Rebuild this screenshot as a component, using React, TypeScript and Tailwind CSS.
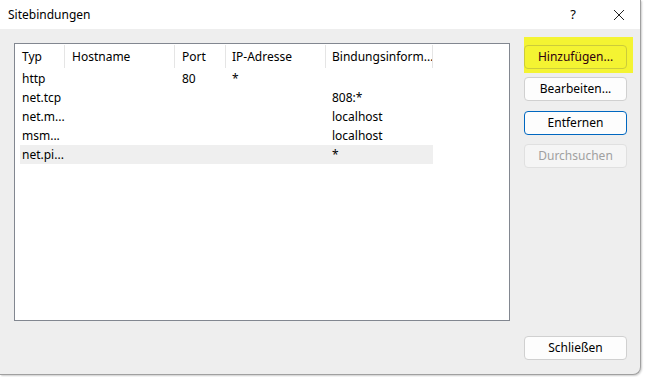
import React from "react";

const font = { fontFamily: '"Noto Sans", "Segoe UI", sans-serif' };

const cols = [
  { w: "w-[45px]", pl: "pl-[2px]" },
  { w: "w-[110px]", pl: "pl-[7px]" },
  { w: "w-[51px]", pl: "pl-[7px]" },
  { w: "w-[100px]", pl: "pl-[6px]" },
  { w: "w-[107px]", pl: "pl-[6px]" },
];

const headers = ["Typ", "Hostname", "Port", "IP-Adresse", "Bindungsinform..."];
const rows = [
  ["http", "", "80", "*", ""],
  ["net.tcp", "", "", "", "808:*"],
  ["net.m...", "", "", "", "localhost"],
  ["msm...", "", "", "", "localhost"],
  ["net.pi...", "", "", "", "*"],
];

function Btn({ children, variant }: { children: React.ReactNode; variant?: "focus" | "disabled" | "hl" }) {
  const base = "h-[24px] w-[103px] rounded-[4px] flex items-center justify-center text-[12px] border";
  const v =
    variant === "focus"
      ? "bg-[#fdfdfd] border-[#0067c0] text-black"
      : variant === "disabled"
      ? "bg-[#f5f5f5] border-[#e0e0e0] text-[#a0a0a0]"
      : variant === "hl"
      ? "bg-[#f4f432] border-[#cccc3a] text-[#300010]"
      : "bg-[#fdfdfd] border-[#d0d0d0] text-black";
  return <div className={`${base} ${v}`}>{children}</div>;
}

export default function App() {
  return (
    <div className="w-[646px] h-[377px] bg-white overflow-hidden" style={font}>
      <div className="w-[641px] h-[375px] bg-[#eeeeee] rounded-br-[8px] border-r border-b border-[#a0a0a0] flex flex-col overflow-hidden shadow-[1px_1px_2px_rgba(0,0,0,0.2)]">
        {/* Title bar */}
        <div className="h-[29px] bg-white flex items-center shrink-0">
          <span className="pl-[8px] text-[12px] text-black">Sitebindungen</span>
          <div className="flex-1" />
          <span className="text-[13px] text-black w-[12px] text-center mr-[34px]">?</span>
          <svg width="12" height="12" viewBox="0 0 12 12" className="mr-[15px]">
            <path d="M1 1 L11 11 M11 1 L1 11" stroke="#222" strokeWidth="1" fill="none" />
          </svg>
        </div>
        {/* Body */}
        <div className="flex-1 flex flex-col pl-[14px] pt-[14px]">
          <div className="flex">
            {/* List */}
            <div className="w-[496px] h-[278px] bg-white border border-[#828790] text-[12px] text-black">
              <div className="flex h-[25px] items-center ml-[5px]">
                {headers.map((h, i) => (
                  <div key={i} className={`${cols[i].w} ${cols[i].pl} h-[23px] flex items-center border-r border-[#e5e5e5] whitespace-nowrap overflow-hidden`}>
                    {h}
                  </div>
                ))}
              </div>
              {rows.map((r, ri) => (
                <div key={ri} className={`flex h-[19px] items-center ml-[5px] w-[413px] ${ri === 4 ? "bg-[#efefef]" : ""}`}>
                  {r.map((c, ci) => (
                    <div key={ci} className={`${cols[ci].w} ${cols[ci].pl} whitespace-nowrap overflow-hidden`}>
                      {c}
                    </div>
                  ))}
                </div>
              ))}
            </div>
            {/* Buttons */}
            <div className="ml-[14px] flex flex-col">
              <div className="bg-[#f4f432] pt-[8px] pb-[4px] -mt-[6px] w-[109px]">
                <Btn variant="hl">Hinzufügen...</Btn>
              </div>
              <div className="mt-[4px]">
                <Btn>Bearbeiten...</Btn>
              </div>
              <div className="mt-[10px]">
                <Btn variant="focus">Entfernen</Btn>
              </div>
              <div className="mt-[9px]">
                <Btn variant="disabled">Durchsuchen</Btn>
              </div>
            </div>
          </div>
          <div className="flex justify-end pr-[13px] mt-[15px]">
            <Btn>Schließen</Btn>
          </div>
        </div>
      </div>
    </div>
  );
}
